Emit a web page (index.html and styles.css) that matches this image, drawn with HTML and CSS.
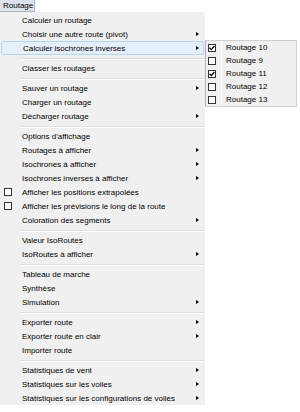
FILE: index.html
```html
<!DOCTYPE html>
<html lang="fr">
<head>
  <meta charset="UTF-8" />
  <title>Routage</title>
  <link rel="stylesheet" href="styles.css">
</head>
<body>

  <div class="menubar">
    <span class="menubar-item">Routage</span>
  </div>

  <div class="menu">
    <div class="item"><span class="gutter"></span><span class="label">Calculer un routage</span></div>
    <div class="item"><span class="gutter"></span><span class="label">Choisir une autre route (pivot)</span><span class="arrow"></span></div>
    <div class="item active"><span class="gutter"></span><span class="label">Calculer isochrones inverses</span><span class="arrow"></span>
      <div class="submenu">
        <div class="sub-item"><span class="sub-check"><svg width="8" height="8"><rect x=".5" y=".5" width="7" height="7" fill="#fff" stroke="#333"/><path d="M1.6 3.8 L3.3 5.6 L6.4 2" stroke="#000" stroke-width="1.3" fill="none"/></svg></span><span class="label">Routage 10</span></div>
        <div class="sub-item"><span class="sub-check"><svg width="8" height="8"><rect x=".5" y=".5" width="7" height="7" fill="#fff" stroke="#333"/></svg></span><span class="label">Routage 9</span></div>
        <div class="sub-item"><span class="sub-check"><svg width="8" height="8"><rect x=".5" y=".5" width="7" height="7" fill="#fff" stroke="#333"/><path d="M1.6 3.8 L3.3 5.6 L6.4 2" stroke="#000" stroke-width="1.3" fill="none"/></svg></span><span class="label">Routage 11</span></div>
        <div class="sub-item"><span class="sub-check"><svg width="8" height="8"><rect x=".5" y=".5" width="7" height="7" fill="#fff" stroke="#333"/></svg></span><span class="label">Routage 12</span></div>
        <div class="sub-item"><span class="sub-check"><svg width="8" height="8"><rect x=".5" y=".5" width="7" height="7" fill="#fff" stroke="#333"/></svg></span><span class="label">Routage 13</span></div>
      </div>
    </div>
    <div class="sep"></div>
    <div class="item"><span class="gutter"></span><span class="label">Classer les routages</span></div>
    <div class="sep"></div>
    <div class="item"><span class="gutter"></span><span class="label">Sauver un routage</span><span class="arrow"></span></div>
    <div class="item"><span class="gutter"></span><span class="label">Charger un routage</span></div>
    <div class="item"><span class="gutter"></span><span class="label">Décharger routage</span><span class="arrow"></span></div>
    <div class="sep"></div>
    <div class="item"><span class="gutter"></span><span class="label">Options d'affichage</span></div>
    <div class="item"><span class="gutter"></span><span class="label">Routages à afficher</span><span class="arrow"></span></div>
    <div class="item"><span class="gutter"></span><span class="label">Isochrones à afficher</span><span class="arrow"></span></div>
    <div class="item"><span class="gutter"></span><span class="label">Isochrones inverses à afficher</span><span class="arrow"></span></div>
    <div class="item"><span class="gutter"><svg width="8" height="8"><rect x=".5" y=".5" width="7" height="7" fill="#fff" stroke="#333"/></svg></span><span class="label">Afficher les positions extrapolées</span></div>
    <div class="item"><span class="gutter"><svg width="8" height="8"><rect x=".5" y=".5" width="7" height="7" fill="#fff" stroke="#333"/></svg></span><span class="label">Afficher les prévisions le long de la route</span></div>
    <div class="item"><span class="gutter"></span><span class="label">Coloration des segments</span><span class="arrow"></span></div>
    <div class="sep"></div>
    <div class="item"><span class="gutter"></span><span class="label">Valeur IsoRoutes</span></div>
    <div class="item"><span class="gutter"></span><span class="label">IsoRoutes à afficher</span><span class="arrow"></span></div>
    <div class="sep"></div>
    <div class="item"><span class="gutter"></span><span class="label">Tableau de marche</span></div>
    <div class="item"><span class="gutter"></span><span class="label">Synthèse</span></div>
    <div class="item"><span class="gutter"></span><span class="label">Simulation</span><span class="arrow"></span></div>
    <div class="sep"></div>
    <div class="item"><span class="gutter"></span><span class="label">Exporter route</span><span class="arrow"></span></div>
    <div class="item"><span class="gutter"></span><span class="label">Exporter route en clair</span><span class="arrow"></span></div>
    <div class="item"><span class="gutter"></span><span class="label">Importer route</span></div>
    <div class="sep"></div>
    <div class="item"><span class="gutter"></span><span class="label">Statistiques de vent</span><span class="arrow"></span></div>
    <div class="item"><span class="gutter"></span><span class="label">Statistiques sur les voiles</span><span class="arrow"></span></div>
    <div class="item"><span class="gutter"></span><span class="label">Statistiques sur les configurations de voiles</span><span class="arrow"></span></div>
  </div>

</body>
</html>
```

FILE: styles.css
```css
body {
  margin: 0;
  background: #fff;
  color: #000;
  font-family: "Liberation Sans", Arial, sans-serif;
  font-size: 8px;
}
.menubar { display: flex; height: 12px; }
.menubar-item {
  box-sizing: border-box;
  width: 35px;
  height: 12px;
  padding-left: 3px;
  line-height: 11px;
  background: #dde3ec;
  border: 1px solid #aab4c4;
  border-top: none;
  border-left: none;
}
.menu {
  width: 205px;
  padding-top: 1px;
  background: #f0f0f0;
}
.item {
  position: relative;
  display: flex;
  align-items: center;
  height: 14px;
  white-space: nowrap;
}
.gutter {
  display: flex;
  align-items: center;
  box-sizing: border-box;
  width: 22px;
  height: 14px;
  padding-left: 4px;
  flex-shrink: 0;
}
.label { flex: 1; }
.arrow {
  width: 0;
  height: 0;
  margin-right: 6px;
  border-left: 3px solid #000;
  border-top: 2.5px solid transparent;
  border-bottom: 2.5px solid transparent;
}
.item.active {
  box-sizing: border-box;
  margin: 0 1px;
  background: #e5eefa;
  border: 1px solid #b9d3ef;
  border-radius: 2px;
}
.item.active .gutter { width: 21px; }
.item.active .arrow { margin-right: 4px; }
.sep {
  height: 3px;
  margin-left: 20px;
  margin-bottom: 2px;
  border-bottom: 1px solid #e0e0e0;
  box-shadow: 0 1px 0 #fff;
}
.submenu {
  position: absolute;
  left: 203px;
  top: -2px;
  width: 90px;
  background: #f0f0f0;
  border: 1px solid #d0d0d0;
  border-left-color: #b0b0b0;
}
.sub-item {
  display: flex;
  align-items: center;
  height: 13px;
}
.sub-check {
  display: flex;
  align-items: center;
  box-sizing: border-box;
  width: 16px;
  height: 13px;
  padding-left: 2px;
  border-right: 1px solid #fff;
  margin-right: 4px;
}
```
